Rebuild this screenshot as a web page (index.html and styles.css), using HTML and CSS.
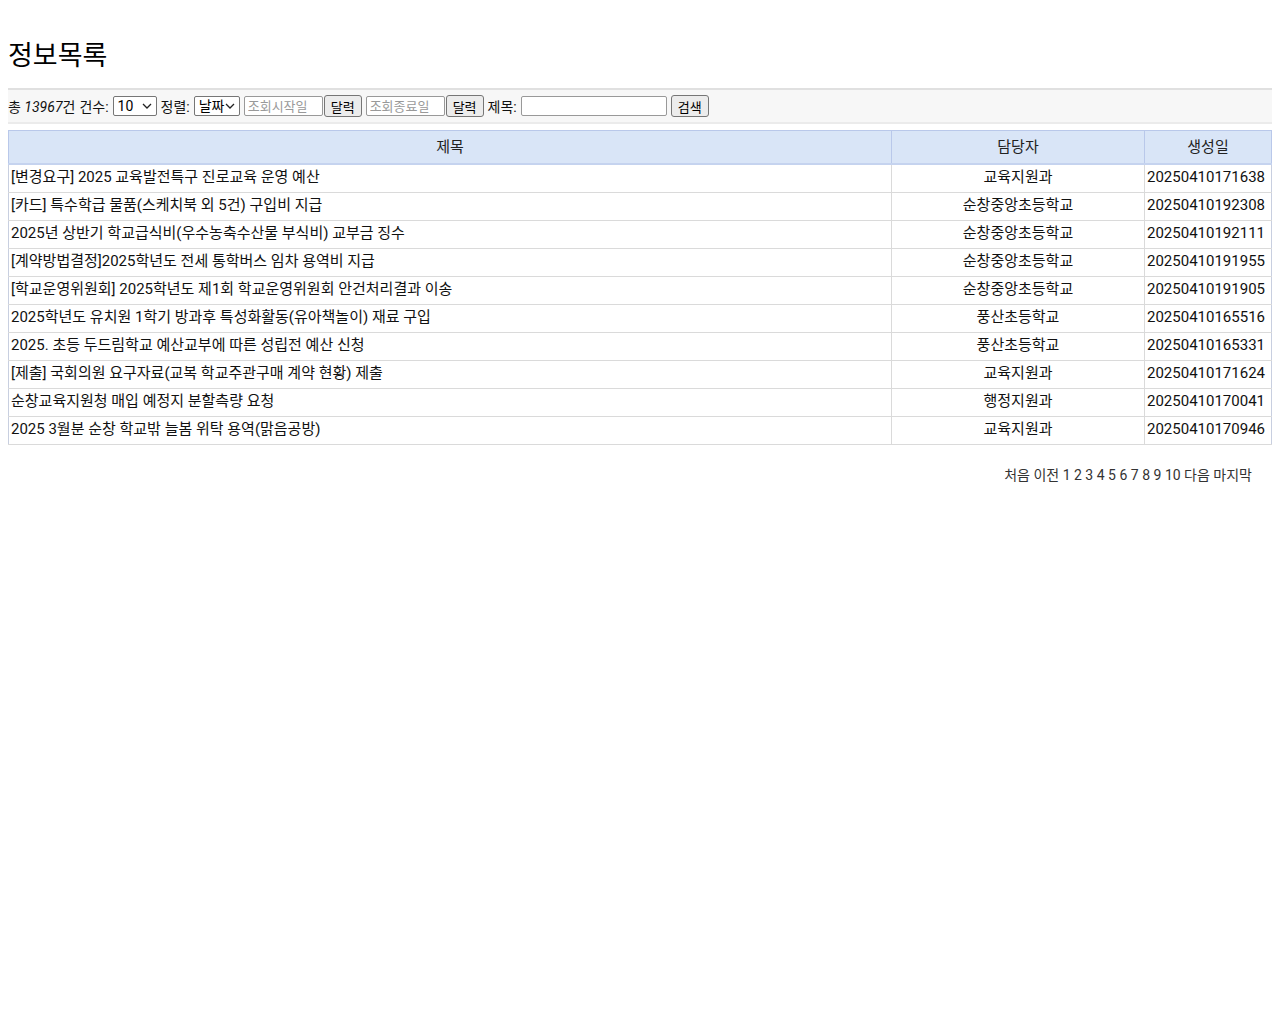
FILE: index.html
```html
<!DOCTYPE html>
<html lang="ko">
<head>
<meta charset="utf-8">
<title>정보목록</title>
<link rel="stylesheet" href="styles.css">
</head>
<body>
<h1 class="title">정보목록</h1>
<div class="toolbar">
  <span>총 <em>13967</em>건</span>
  <label>건수:</label>
  <select class="sel sel-count"><option>10</option></select>
  <label>정렬:</label>
  <select class="sel sel-sort"><option>날짜</option></select>
  <input class="date" type="text" placeholder="조회시작일"><button class="btn">달력</button>
  <input class="date" type="text" placeholder="조회종료일"><button class="btn">달력</button>
  <label>제목:</label>
  <input class="subject" type="text">
  <button class="btn">검색</button>
</div>
<table class="list">
  <thead>
    <tr><th class="c-title">제목</th><th class="c-owner">담당자</th><th class="c-date">생성일</th></tr>
  </thead>
  <tbody>
    <tr><td>[변경요구] 2025 교육발전특구 진로교육 운영 예산</td><td class="center">교육지원과</td><td>20250410171638</td></tr>
    <tr><td>[카드] 특수학급 물품(스케치북 외 5건) 구입비 지급</td><td class="center">순창중앙초등학교</td><td>20250410192308</td></tr>
    <tr><td>2025년 상반기 학교급식비(우수농축수산물 부식비) 교부금 징수</td><td class="center">순창중앙초등학교</td><td>20250410192111</td></tr>
    <tr><td>[계약방법결정]2025학년도 전세 통학버스 임차 용역비 지급</td><td class="center">순창중앙초등학교</td><td>20250410191955</td></tr>
    <tr><td>[학교운영위원회] 2025학년도 제1회 학교운영위원회 안건처리결과 이송</td><td class="center">순창중앙초등학교</td><td>20250410191905</td></tr>
    <tr><td>2025학년도 유치원 1학기 방과후 특성화활동(유아책놀이) 재료 구입</td><td class="center">풍산초등학교</td><td>20250410165516</td></tr>
    <tr><td>2025. 초등 두드림학교 예산교부에 따른 성립전 예산 신청</td><td class="center">풍산초등학교</td><td>20250410165331</td></tr>
    <tr><td>[제출] 국회의원 요구자료(교복 학교주관구매 계약 현황) 제출</td><td class="center">교육지원과</td><td>20250410171624</td></tr>
    <tr><td>순창교육지원청 매입 예정지 분할측량 요청</td><td class="center">행정지원과</td><td>20250410170041</td></tr>
    <tr><td>2025 3월분 순창 학교밖 늘봄 위탁 용역(맑음공방)</td><td class="center">교육지원과</td><td>20250410170946</td></tr>
  </tbody>
</table>
<div class="pager">
  <a>처음</a> <a>이전</a> <a>1</a> <a>2</a> <a>3</a> <a>4</a> <a>5</a> <a>6</a> <a>7</a> <a>8</a> <a>9</a> <a>10</a> <a>다음</a> <a>마지막</a>
</div>
</body>
</html>
```

FILE: styles.css
```css
body {
  margin: 8px;
  font-family: Roboto, "Noto Sans CJK KR", sans-serif;
  font-size: 14px;
  color: #111;
  background: #fff;
}
.title {
  font-size: 27px;
  font-weight: normal;
  margin: 28px 0 12px;
  line-height: 40px;
  color: #000;
}
.toolbar {
  display: flex;
  align-items: center;
  gap: 4px;
  height: 32px;
  background: #f7f7f7;
  border-top: 2px solid #e0e0e0;
  border-bottom: 2px solid #ebebeb;
  font-size: 14px;
  color: #111;
}
.toolbar em {
  font-style: italic;
}
.toolbar select,
.toolbar input,
.toolbar button {
  font-family: Roboto, "Noto Sans CJK KR", sans-serif;
  font-size: 13px;
  height: 20px;
  box-sizing: border-box;
  margin: 0;
}
.toolbar .sel {
  -webkit-appearance: none;
  appearance: none;
  border: 1px solid #767676;
  border-radius: 2px;
  background-color: #fff;
  background-image: url("data:image/svg+xml;utf8,<svg xmlns='http://www.w3.org/2000/svg' width='10' height='6' viewBox='0 0 10 6'><path d='M1 1l4 4 4-4' fill='none' stroke='%23222' stroke-width='1.3'/></svg>");
  background-repeat: no-repeat;
  background-position: right 4px center;
  padding: 0 14px 0 4px;
  font-size: 14px;
  color: #000;
}
.sel-count { width: 44px; }
.sel-sort { width: 46px; }
.sel-sort { padding-left: 3px; }
.toolbar input {
  border: 1px solid #999;
  border-radius: 2px;
  padding: 1px 3px;
  background: #fff;
}
.toolbar input::placeholder { color: #999; }
.date { width: 79px; }
.subject { width: 146px; }
.toolbar .btn {
  border: 1px solid #767676;
  border-radius: 3px;
  background: #ececec;
  padding: 0 6px;
  height: 22px;
  color: #000;
}
.date + .btn { margin-left: -3px; }
.list {
  margin-top: 6px;
  width: 100%;
  border-collapse: collapse;
  border: 1px solid #c8cfe0;
  font-size: 15px;
}
.list th {
  background: #d9e5f7;
  font-weight: normal;
  height: 29px;
  padding: 0 0 3px 0;
  border: 1px solid #b9c8ea;
  border-bottom: 2px solid #c5d3ef;
  color: #222;
  font-size: 15px;
}
.list td {
  height: 24px;
  line-height: 22px;
  padding: 0 2px 3px 2px;
  border: 1px solid #dadada;
  white-space: nowrap;
}
.list td:first-child { border-left-color: #c8cfe0; }
.list td:last-child { border-right-color: #c8cfe0; }
.list td.center { text-align: center; }
.c-owner { width: 252px; }
.c-date { width: 126px; }
.pager {
  text-align: right;
  padding: 19px 20px 0 0;
  color: #333;
  font-size: 14px;
}
.pager a {
  color: #333;
}
```
